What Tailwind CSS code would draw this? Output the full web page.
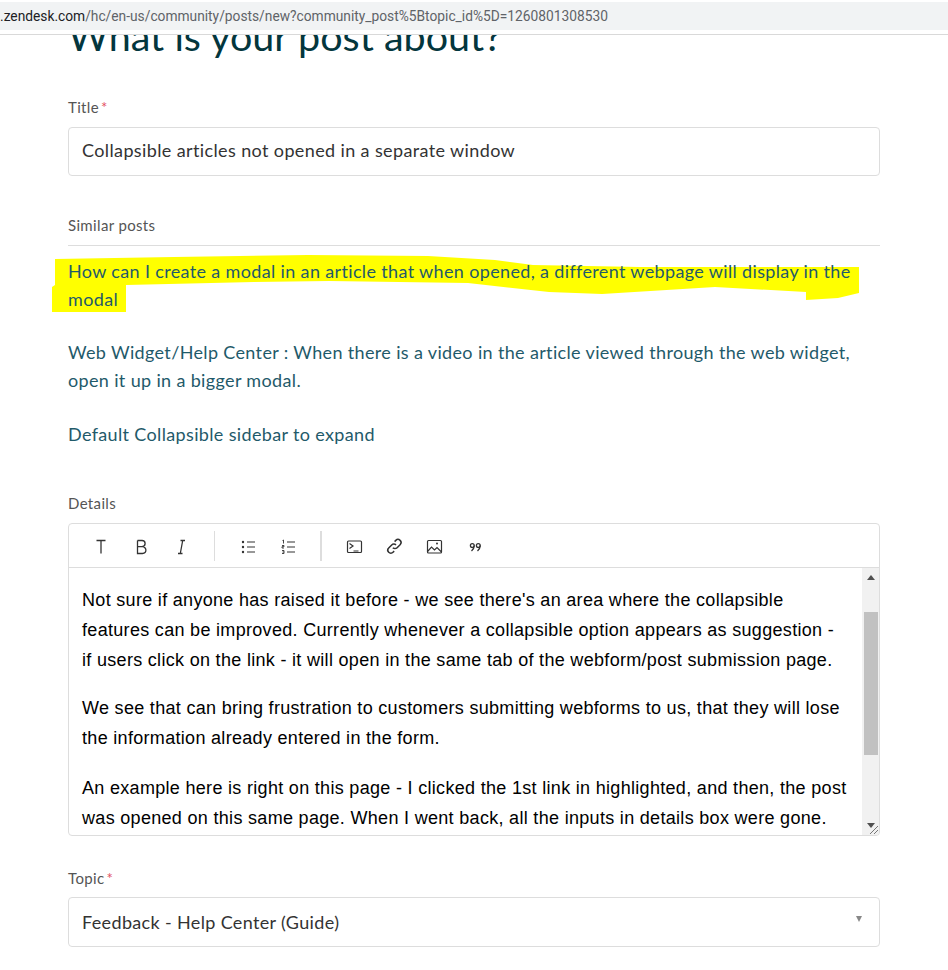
<!DOCTYPE html>
<html lang="en">
	<head>
		<meta charset="UTF-8" />
		<title>What is your post about?</title>
		<script src="https://cdn.jsdelivr.net/npm/@tailwindcss/browser@4"></script>
	</head>
	<body class="bg-white font-['Lato','Liberation_Sans',sans-serif] overflow-hidden">
		<div class="relative w-[948px] h-[970px] overflow-hidden">
			<!-- marker scribble over the first suggestion -->
			<svg class="absolute left-0 top-0 w-[948px] h-[970px]" viewBox="0 0 948 970">
				<polygon fill="#ffff00" points="55,259 174,257 308,255 428,256 495,260 533,265 640,267 736,267 859,267 859,293 838,298 806,300 806,292 715,287 602,294 549,292 468,283 329,281 254,282 126,285 126,312 52,312 52,287 55,285" />
			</svg>

			<!-- browser address bar -->
			<div class="relative z-10 h-[35px] bg-white border-b border-[#d9d9d9] pt-[2px]">
				<div class="h-[28px] bg-[#f1f3f4] flex items-center font-['Roboto',sans-serif] text-[13.77px] text-[#5f6368] whitespace-nowrap">
					<span class="text-[#202124]">.zendesk.com</span><span>/hc/en-us/community/posts/new?community_post%5Btopic_id%5D=1260801308530</span>
				</div>
			</div>

			<main class="relative pl-[68px] w-[880px] tracking-[0.35px]">
				<h1 class="-mt-[28px] h-[58px] text-[39.5px] leading-[58px] tracking-normal text-[#03363d] whitespace-nowrap">What is your post about?</h1>

				<label class="block mt-[32px] text-[15px] leading-[20px] text-[#555]">Title<span class="text-[#e34f5f] ml-[2px]">*</span></label>
				<input class="block mt-[10px] w-full h-[49px] px-[13px] pb-[3px] border border-[#ddd] rounded-[4px] text-[18px] tracking-[0.38px] text-[#333]" value="Collapsible articles not opened in a separate window" />

				<section class="mt-[39px]">
					<h2 class="text-[15px] leading-[20px] text-[#555] pb-[10px] border-b border-[#ddd]">Similar posts</h2>
					<ul class="mt-[11px] text-[18px] leading-[28px] text-[#1f5a6a]">
						<li>How can I create a modal in an article that when opened, a different webpage will display in the modal</li>
						<li class="mt-[25px]">Web Widget/Help Center : When there is a video in the article viewed through the web widget, open it up in a bigger modal.</li>
						<li class="mt-[26px]">Default Collapsible sidebar to expand</li>
					</ul>
				</section>

				<label class="block mt-[45px] text-[15px] leading-[20px] text-[#555]">Details</label>
				<div class="mt-[10px] h-[313px] border border-[#ddd] rounded-[4px] flex flex-col overflow-hidden tracking-normal">
					<div class="h-[44px] shrink-0 pt-[1px] border-b border-[#ddd] flex items-center">
						<div class="flex items-center h-[30px] pl-[22px] gap-[20px] border-r border-[#ddd] w-[146px]">
							<svg class="w-[20px] h-[20px]" viewBox="0 0 20 20" fill="none" stroke="#333" stroke-width="1.3"><path d="M5.500 4.500h9M10 4.500v13" /></svg>
							<svg class="w-[20px] h-[20px]" viewBox="0 0 20 20" fill="none" stroke="#333" stroke-width="1.3"><path d="M6.500 4.500v13h5a3.200 3.200 0 0 0 0-6.800h-5M6.500 4.500h4.500a3.100 3.100 0 0 1 0 6.200" /></svg>
							<svg class="w-[20px] h-[20px]" viewBox="0 0 20 20" fill="none" stroke="#333" stroke-width="1.3"><path d="M9.300 17.500L11.700 4.500M9.500 4.500h4.500M7 17.500h4.500" /></svg>
						</div>
						<div class="flex items-center h-[30px] pl-[23px] gap-[20px] border-r-2 border-[#ddd] w-[107px]">
							<svg class="w-[20px] h-[20px]" viewBox="0 0 20 20" fill="none" stroke="#333"><circle cx="5" cy="6" r="1.200" fill="#333" stroke="none" /><circle cx="5" cy="11" r="1.200" fill="#333" stroke="none" /><circle cx="5" cy="16" r="1.200" fill="#333" stroke="none" /><path stroke-width="1.200" d="M9 6h8M9 11h8M9 16h8" /></svg>
							<svg class="w-[20px] h-[20px]" viewBox="0 0 20 20" fill="none" stroke="#333"><path stroke-width="0.9" d="M4.500 4.500l1-.5v3.500M4 9.500h2v1.200h-2v1.300h2M4 14.500h2v3h-2M4.500 16h1.500" /><path stroke-width="1.200" d="M9 6h8M9 11h8M9 16h8" /></svg>
						</div>
						<div class="flex items-center pl-[22px] gap-[20px]">
							<svg class="w-[20px] h-[20px]" viewBox="0 0 20 20" fill="none" stroke="#333" stroke-width="1.200"><rect x="3.500" y="5" width="14" height="11.500" rx="1" /><path d="M5.500 7.500l3.500 2.500-3.500 2.500M9.500 15h5" /></svg>
							<svg class="w-[20px] h-[20px]" viewBox="0 0 20 20" fill="none" stroke="#333" stroke-width="1.500"><path d="M8.800 11.700a3 3 0 0 0 4.300 0l3-3a3 3 0 0 0-4.300-4.300l-1.200 1.200" /><path d="M12 9a3 3 0 0 0-4.300 0l-3 3a3 3 0 0 0 4.300 4.300l1.200-1.200" /></svg>
							<svg class="w-[20px] h-[20px]" viewBox="0 0 20 20" fill="none" stroke="#333" stroke-width="1.200"><rect x="3.500" y="4.500" width="14" height="12.500" rx="1" /><path d="M3.500 15.500l4-4.500 3 3 2.500-2.500 4.500 4.500" /><circle cx="13" cy="7.500" r="1" fill="#333" stroke="none" /></svg>
							<svg class="w-[20px] h-[20px]" viewBox="0 0 20 20" fill="none" stroke="#333" stroke-width="1.300"><circle cx="8.300" cy="9.500" r="1.900" /><path d="M10.200 9.500c0 2.500-1 4-2.700 5.500" /><circle cx="14.300" cy="9.500" r="1.900" /><path d="M16.200 9.500c0 2.500-1 4-2.700 5.500" /></svg>
						</div>
					</div>
					<div class="flex flex-1 min-h-0">
						<div class="flex-1 min-w-0 overflow-hidden pl-[13px] pt-[17px] pr-[14px] font-['Liberation_Sans',Arial,sans-serif] text-[18px] leading-[30px] tracking-[0.31px] text-black">
							<p>Not sure if anyone has raised it before - we see there's an area where the collapsible features can be improved. Currently whenever a collapsible option appears as suggestion - if users click on the link - it will open in the same tab of the webform/post submission page.</p>
							<p class="mt-[18px]">We see that can bring frustration to customers submitting webforms to us, that they will lose the information already entered in the form.</p>
							<p class="mt-[20px]">An example here is right on this page - I clicked the 1st link in highlighted, and then, the post was opened on this same page. When I went back, all the inputs in details box were gone.</p>
						</div>
						<!-- scrollbar -->
						<div class="relative w-[17px] shrink-0 bg-[#f1f1f1] flex flex-col items-center">
							<div class="mt-[7px] w-0 h-0 border-x-[4px] border-x-transparent border-b-[5px] border-b-[#505050]"></div>
							<div class="mt-[32px] w-[14px] h-[143px] bg-[#c1c1c1]"></div>
							<div class="mt-[68px] w-0 h-0 border-x-[4px] border-x-transparent border-t-[5px] border-t-[#505050]"></div>
							<svg class="absolute right-0 bottom-0 w-[12px] h-[12px]" viewBox="0 0 12 12" stroke="#777"><path d="M11 3L3 11M11 7L7 11" /></svg>
						</div>
					</div>
				</div>

				<label class="block mt-[32px] text-[15px] leading-[20px] text-[#555]">Topic<span class="text-[#e34f5f] ml-[2px]">*</span></label>
				<div class="mt-[9px] relative h-[50px] px-[13px] border border-[#ddd] rounded-[4px] flex items-center text-[18px] text-[#333]">
					Feedback - Help Center (Guide)
					<span class="absolute right-[17px] top-[18px] w-0 h-0 border-x-[3.500px] border-x-transparent border-t-[6px] border-t-[#888]"></span>
				</div>
			</main>
		</div>
	</body>
</html>
